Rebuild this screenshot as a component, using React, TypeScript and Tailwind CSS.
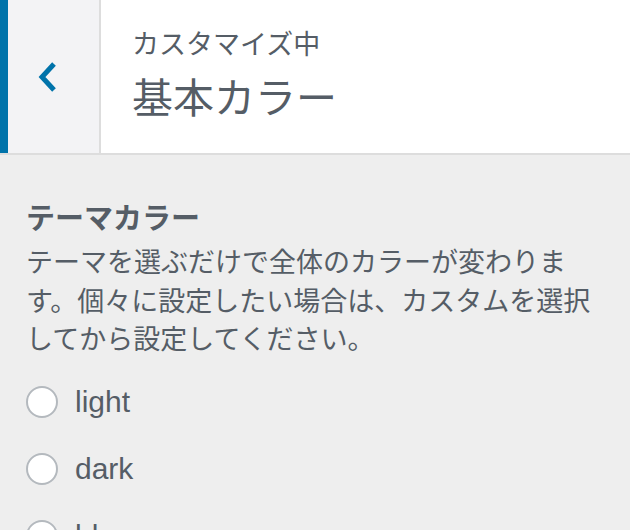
import { useState } from 'react';

const themes = ['light', 'dark', 'blue'];

const BackIcon = () => (
  <svg width="20" height="30" viewBox="0 0 20 30" fill="none">
    <polyline points="17,2 5,15 17,28" stroke="#0073aa" strokeWidth="5" strokeLinejoin="miter" />
  </svg>
);

const App = () => {
  const [theme, setTheme] = useState<string | null>(null);

  return (
    <div
      className="w-[630px] h-[530px] overflow-hidden bg-[#eeeeee] text-[#555d66]"
      style={{ fontFamily: '"Liberation Sans", "Noto Sans CJK JP", sans-serif' }}
    >
      {/* Section header */}
      <div className="flex h-[155px] bg-white border-b-2 border-[#dddddd]">
        <button className="w-[101px] h-full flex items-center pl-[29px] bg-[#f3f3f5] border-l-8 border-l-[#0073aa] border-r-2 border-r-[#dddddd]">
          <BackIcon />
        </button>
        <div className="pl-[31px] pt-[30px]">
          <div className="text-[27px] leading-[30px]">カスタマイズ中</div>
          <h3 className="mt-[15px] text-[41px] leading-[48px]">基本カラー</h3>
        </div>
      </div>

      {/* Control */}
      <div className="pl-[26px] pt-[44px]">
        <div className="text-[29px] leading-[40px] font-bold">テーマカラー</div>
        <p className="mt-[5px] w-[582px] text-[27px] leading-[38.5px]">
          テーマを選ぶだけで全体のカラーが変わります。個々に設定したい場合は、カスタムを選択してから設定してください。
        </p>
        <div className="mt-[9px]">
          {themes.map((t) => (
            <label key={t} className="flex items-center h-[67px] cursor-pointer">
              <span
                onClick={() => setTheme(t)}
                className="w-[32px] h-[32px] rounded-full border-2 border-[#b4b9be] bg-white flex items-center justify-center"
              >
                {theme === t && <span className="w-[16px] h-[16px] rounded-full bg-[#1e8cbe]" />}
              </span>
              <span className="ml-[17px] text-[30px] leading-[34px]">{t}</span>
            </label>
          ))}
        </div>
      </div>
    </div>
  );
};

export default App;
